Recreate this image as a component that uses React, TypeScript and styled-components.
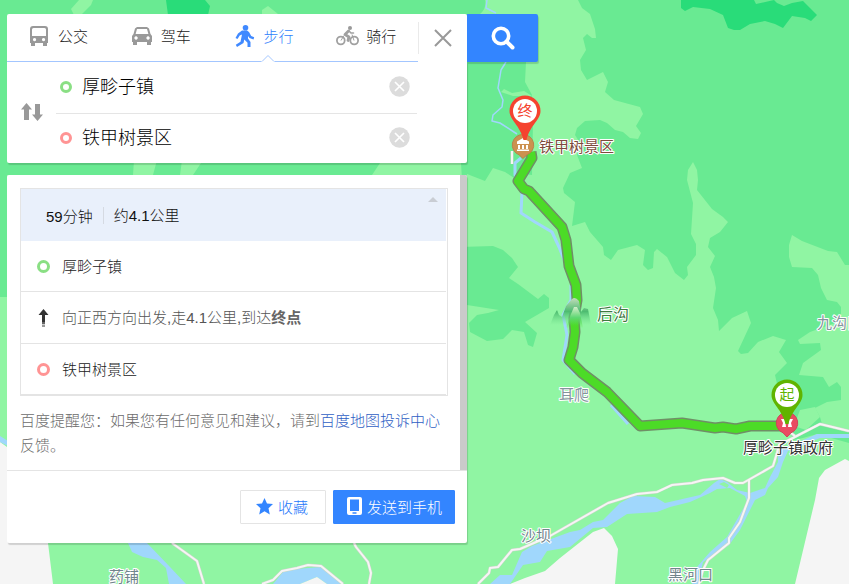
import React, { useState } from "react";
import styled, { createGlobalStyle } from "styled-components";

const GlobalStyle = createGlobalStyle`
  *, *::before, *::after { box-sizing: border-box; }
  body {
    margin: 0;
    background: #90f5a3;
    font-family: "Liberation Sans", "Noto Sans CJK SC", sans-serif;
    font-size: 15px;
    font-weight: 300;
    color: #222;
  }
  button, input { font: inherit; color: inherit; }
  button { border: 0; padding: 0; background: none; cursor: pointer; }
`;

const Page = styled.main`
  position: relative;
  min-height: 100vh;
  padding: 14px 7px;
  overflow: hidden;
`;

const MapCanvas = styled.svg`
  position: absolute;
  inset: 0;
  width: 100%;
  height: 100%;
`;

const MapLabel = styled.text<{ $size?: number }>`
  font-family: "Noto Sans CJK SC", sans-serif;
  font-size: ${(p) => p.$size ?? 15}px;
  font-weight: 400;
  stroke: #fff;
  stroke-width: 2px;
  stroke-linejoin: round;
  paint-order: stroke;
`;

const PinText = styled.text`
  font-family: "Noto Sans CJK SC", sans-serif;
  font-size: 15px;
  font-weight: 400;
  text-anchor: middle;
`;

const Sidebar = styled.div`
  position: relative;
  display: flex;
  flex-direction: column;
  gap: 12px;
  width: 100%;
  max-width: 531px;
`;

const SearchRow = styled.div`
  display: flex;
  align-items: flex-start;
`;

const Card = styled.section`
  background: #fff;
  border-radius: 2px;
  box-shadow: 1px 2px 1px rgba(0, 0, 0, 0.15);
`;

const SearchCard = styled(Card)`
  flex: 1;
  min-width: 0;
`;

const SearchButton = styled.button`
  display: grid;
  place-items: center;
  flex: 0 0 71px;
  height: 48px;
  border-radius: 0 2px 2px 0;
  background: #3385ff;
  box-shadow: 1px 2px 1px rgba(0, 0, 0, 0.15);
`;

const ModeBar = styled.div`
  display: flex;
  height: 48px;
`;

const Tabs = styled.div`
  flex: 1;
  display: grid;
  grid-template-columns: repeat(4, 1fr);
  border-bottom: 1px solid #a3c6ff;
`;

const Tab = styled.button<{ $active: boolean }>`
  position: relative;
  display: flex;
  align-items: center;
  gap: 6px;
  padding-left: 19px;
  padding-bottom: 4px;
  white-space: nowrap;
  color: ${(p) => (p.$active ? "#2f7ffc" : "#222")};
`;

const IconSlot = styled.span`
  display: grid;
  place-items: center;
  flex: 0 0 26px;
`;

const Caret = styled.svg`
  position: absolute;
  left: 48px;
  bottom: -1px;
`;

const CloseCell = styled.div`
  display: flex;
  align-items: center;
  flex: 0 0 49px;
`;

const CloseButton = styled.button`
  display: grid;
  place-items: center;
  width: 100%;
  height: 32px;
  border-left: 1px solid #eaeaea;
`;

const RouteForm = styled.form`
  display: flex;
  padding-right: 50px;
`;

const SwapButton = styled.button`
  display: grid;
  place-items: center;
  flex: 0 0 49px;
  padding-bottom: 2px;
`;

const Fields = styled.div`
  flex: 1;
  min-width: 0;
`;

const Field = styled.label`
  display: flex;
  align-items: center;
  gap: 10px;
  height: 51px;
  padding: 0 7px 2px 4px;
  & + & {
    height: 50px;
    border-top: 1px solid #e5e5e5;
  }
`;

const FieldInput = styled.input`
  flex: 1;
  min-width: 0;
  padding: 0 0 4px;
  border: 0;
  outline: 0;
  background: none;
  font-size: 18px;
  color: #000;
`;

const ClearButton = styled.button`
  display: grid;
  place-items: center;
`;

const Ring = styled.span<{ $color: string; $size: number }>`
  flex: none;
  width: ${(p) => p.$size}px;
  height: ${(p) => p.$size}px;
  border: 3px solid ${(p) => p.$color};
  border-radius: 50%;
`;

const ResultCard = styled(Card)`
  margin-right: 71px;
  overflow: hidden;
`;

const Scroller = styled.div`
  padding: 13px 12px 12px 13px;
  border-right: 7px solid #cacaca;
`;

const Plan = styled.div`
  padding-right: 1px;
  border: 1px solid #e4e4e4;
`;

const PlanHead = styled.header`
  display: flex;
  align-items: center;
  position: relative;
  height: 52px;
  padding-left: 25px;
  background: #e9f0fb;
  color: #111;
`;

const Distance = styled.span`
  margin-left: 10px;
  padding-left: 10px;
  line-height: 17px;
  border-left: 1px solid #d5dae2;
`;

const CollapseButton = styled.button`
  position: absolute;
  top: 8px;
  right: 8px;
  display: grid;
`;

const Steps = styled.ol`
  margin: 0;
  padding: 0;
  list-style: none;
`;

const Step = styled.li<{ $muted?: boolean }>`
  display: flex;
  align-items: center;
  gap: 12px;
  height: 51px;
  padding-left: 16px;
  border-bottom: 1px solid #e4e4e4;
  color: ${(p) => (p.$muted ? "#555" : "#222")};
  &:nth-child(2) { height: 52px; }
`;

const StepText = styled.span`
  padding-bottom: 2px;
`;

const Target = styled.strong`
  font-weight: 700;
  color: #666;
`;

const StepIcon = styled.span`
  display: grid;
  place-items: center;
  flex: 0 0 13px;
`;

const Notice = styled.p`
  margin: 12px 0 0;
  line-height: 25px;
  color: #6c6c6c;
`;

const NoticeLink = styled.a`
  color: #2f60c4;
  text-decoration: none;
`;

const Actions = styled.footer`
  display: flex;
  justify-content: flex-end;
  gap: 7px;
  padding: 19px 12px;
  border-top: 1px solid #e4e4e4;
`;

const ActionButton = styled.button<{ $primary?: boolean }>`
  display: flex;
  align-items: center;
  justify-content: center;
  gap: 5px;
  height: 34px;
  padding: ${(p) => (p.$primary ? "0 12px 2px 13px" : "0 17px 2px 15px")};
  border: 1px solid ${(p) => (p.$primary ? "#3385ff" : "#e4e4e4")};
  border-radius: 1px;
  background: ${(p) => (p.$primary ? "#3385ff" : "#fff")};
  color: ${(p) => (p.$primary ? "#fff" : "#2478fa")};
`;

const BusIcon = () => (
  <svg width="18" height="20" viewBox="0 0 18 20">
    <path fillRule="evenodd" fill="#999" d="M3 0h12a3 3 0 0 1 3 3v14h-1v3h-4v-3H5v3H1v-3H0V3a3 3 0 0 1 3-3zM3.500 2Q2 2 2 3.500V10h14V3.500Q16 2 14.500 2zM4.500 12a1.600 1.600 0 1 0 .1 0zM13.500 12a1.600 1.600 0 1 0 .1 0z" />
  </svg>
);

const CarIcon = () => (
  <svg width="20" height="18" viewBox="0 0 20 18">
    <path fillRule="evenodd" fill="#999" d="M5 0h10l2 1.500L18.500 7 20 9v6h-1v3h-4v-3H5v3H1v-3H0V9l1.500-2L3 1.500zM5 2 3.600 7h12.800L15 2zM4 9.300a1.700 1.700 0 1 0 .1 0zM16 9.300a1.700 1.700 0 1 0 .1 0z" />
  </svg>
);

const WalkIcon = () => (
  <svg width="20" height="22" viewBox="0 0 20 22">
    <circle cx="10.500" cy="2.800" r="2.800" fill="#4089ff" />
    <path fill="#4089ff" d="M7 5.500h5l2 1.500 2.200 4 3 1.300-.7 2.200-4-1.500-1.500-2v2.500l2.500 3.500V22h-3v-4.200L9.300 14.500 8.500 18 2 22 .8 19.700l4.700-3L7 9.500l-2.300 1L2.500 14l-2-1L3 8.500z" />
  </svg>
);

const BikeIcon = () => (
  <svg width="23" height="20" viewBox="0 0 23 20">
    <g fill="none" stroke="#a0a0a0">
      <circle cx="4.800" cy="14.500" r="3.900" strokeWidth="1.800" />
      <circle cx="18.200" cy="14.500" r="3.900" strokeWidth="1.800" />
      <path strokeWidth="2.800" strokeLinejoin="round" strokeLinecap="round" d="M12.500 5 9 8.500l4 2.500-1 3.500" />
      <path strokeWidth="1.600" strokeLinecap="round" d="M13 5l2 2h2.500" />
      <path strokeWidth="1" d="M5 14.500l3-5M18 14.500 16 8.500" />
    </g>
    <circle cx="14" cy="2" r="2" fill="#999" />
  </svg>
);

const CloseIcon = () => (
  <svg width="18" height="18" viewBox="0 0 18 18">
    <path d="M1 1 17 17M17 1 1 17" stroke="#999" strokeWidth="2" />
  </svg>
);

const SearchIcon = () => (
  <svg width="24" height="24" viewBox="0 0 24 24" fill="none" stroke="#fff">
    <circle cx="10" cy="10" r="7.700" strokeWidth="3.600" />
    <path d="m15.500 15.500 6 6" strokeWidth="4" strokeLinecap="round" />
  </svg>
);

const SwapIcon = () => (
  <svg width="22" height="18" viewBox="0 0 22 18" fill="#999">
    <path d="M5.500 0 11 6.500H8V17H3V6.500H0zM16.500 18 11 11.500h3V1h5v10.500h3z" />
  </svg>
);

const ClearIcon = () => (
  <svg width="21" height="21" viewBox="0 0 21 21">
    <circle cx="10.500" cy="10.500" r="10.200" fill="#dcdcdc" />
    <path d="m6 6 9 9m0-9-9 9" stroke="#fff" strokeWidth="1.700" />
  </svg>
);

const StraightIcon = () => (
  <svg width="11" height="18" viewBox="0 0 11 18">
    <path d="M5.500 0 10.500 6H7V13H4V6H.5z" fill="#333" />
    <path d="M4 13h3v2H4z" fill="#666" />
    <path d="M4 15.500h3V18H4z" fill="#999" />
  </svg>
);

const StarIcon = () => (
  <svg width="17" height="17" viewBox="0 0 17 17">
    <path fill="#3385ff" d="m8.500 0 2.500 5.600 6 .5-4.500 4.100 1.300 6.300-5.300-3.200-5.300 3.200 1.300-6.300L0 6.100l6-.5z" />
  </svg>
);

const PhoneIcon = () => (
  <svg width="15" height="18" viewBox="0 0 15 18">
    <path fillRule="evenodd" fill="#fff" d="M2 0h11a2 2 0 0 1 2 2v14a2 2 0 0 1-2 2H2a2 2 0 0 1-2-2V2a2 2 0 0 1 2-2zM3 2.500V14h9V2.500zM5.500 15.200v1.500h4v-1.500z" />
  </svg>
);

function Pin({ x, y, color, text }: { x: number; y: number; color: string; text: string }) {
  return (
    <g transform={`translate(${x} ${y})`}>
      <path fill={color} d="M0-15.500A15.500 15.500 0 0 1 15.500 0C15.500 9 5 14 1.500 29h-3C-5 14-15.500 9-15.500 0A15.500 15.500 0 0 1 0-15.500z" />
      <circle r="12" fill="#fff" />
      <PinText y={5} fill={color}>{text}</PinText>
    </g>
  );
}

const LAND = "#90f5a3";
const FOREST = "#69ea92";
const DENSE = "#29dc79";
const WATER = "#a0d7fc";
const PLAIN = "#f5f5f5";

const routePoints =
  "531,152 532,158 518,181 524,189 529,191 562,227 566,240 569,266 576,285 577,300 574,318 575,332 573,347 569,360 582,373 607,392 640,426 682,423 715,428 723,427 736,429 750,426 783,426";

const roads = [
  "478,584 489,573 490,568 498,567 512,550 520,549 550,536 608,503 637,494 657,492 672,485 692,483 703,480 723,478 735,483 743,483 773,466 777,453 779,445 787,441 820,424 849,431",
  "749,480 749,498 740,522 729,538 729,543 708,560 703,570 699,584",
  "172,543 197,561 204,584",
  "262,584 273,580 282,571 297,568 308,565 321,566 343,584",
  "354,543 356,547 368,562 371,573 369,584",
  "512,151 512,164",
  "787,430 795,436",
];

const labels = [
  { x: 539, y: 152, text: "铁甲树景区", color: "#7d4b3c" },
  { x: 597, y: 320, text: "后沟", color: "#3f7a3f", size: 16 },
  { x: 559, y: 400, text: "耳爬", color: "#84949c" },
  { x: 521, y: 541, text: "沙坝", color: "#71858c" },
  { x: 109, y: 582, text: "药铺", color: "#71858c" },
  { x: 668, y: 580, text: "黑河口", color: "#71858c" },
  { x: 817, y: 328, text: "九沟口", color: "#84949c" },
  { x: 743, y: 453, text: "厚畛子镇政府", color: "#333" },
];

function MapView() {
  return (
    <MapCanvas viewBox="0 0 849 584" preserveAspectRatio="xMinYMin slice" role="img" aria-label="步行路线地图">
      <defs>
        <linearGradient id="peak" x1="0" y1="0" x2="0" y2="1">
          <stop offset="0" stopColor="#c4dcbb" />
          <stop offset="0.500" stopColor="#4dbb70" />
          <stop offset="1" stopColor="#6fe08c" stopOpacity="0" />
        </linearGradient>
        <linearGradient id="foothill" x1="0" y1="0" x2="0" y2="1">
          <stop offset="0" stopColor="#d3ecca" />
          <stop offset="0.500" stopColor="#5fd873" />
          <stop offset="1" stopColor="#4cdb27" stopOpacity="0" />
        </linearGradient>
      </defs>
      <rect width="849" height="584" fill={LAND} />
      <g fill={FOREST}>
        <path d="M0 0H485Q487 8 480 14L467 62H526L525 82 532 95 533 122 532 175 524 174 519 181 505 172 493 168 485 181 467 174 467 180H462L461 163H380L372 175H0V297H0z" />
        <path d="M0 160H7V297H0z" />
        <path d="M578 0 582 8 590 14 595 29 596 38 592 38 587 34 583 38 586 50 580 60 581 70 587 80 603 72 608 82 605 92 614 100 640 107 643 114 636 126 641 133 638 139 630 138 623 132 615 130 607 123 600 120 585 121 577 128 575 135 580 143 577 155 582 168 570 173 563 188 564 193 575 202 572 226 585 222 590 232 603 247 604 255 611 260 618 250 637 245 645 250 643 265 648 270 653 268 654 252 657 249 667 257 675 273 684 280 688 275 687 267 696 255 696 244 691 234 693 203 687 180 688 170 693 162 697 170 698 180 697 190 712 209 723 217 728 222 720 232 710 238 708 247 715 256 710 267 714 277 716 288 713 308 718 320 719 331 732 318 747 311 751 323 738 351 741 354 748 353 758 342 773 336 786 340 779 352 787 363 775 375 783 410 793 440 803 438 817 434 849 443V432L822 424 820 417 815 408 827 402 841 400 841 387 837 382 829 387 823 377 799 375 803 363 821 350 820 343 800 344 798 340 810 332 835 323 841 318 841 307 837 302 827 300 821 288 818 275 812 268 792 267 789 257 789 245 792 235 802 241 828 251 837 252 845 265 849 265V0z" />
        <path d="M460 247 493 246 503 250 512 258 518 267 509 278 518 284 538 299 544 294 549 298 549 308 525 322 537 333 533 347 528 345 524 332 512 330 503 339 487 341 470 332 469 323 477 315 488 313 499 310 467 305H460z" />
      </g>
      <path fill={LAND} d="M79 0 71 9 74 15H81L91 5 93 0zM262 10 268 6 278 14H262zM134 160H157L153 175H133zM182 160H203L193 175H180zM501 92 504 89 512 93 524 91 532 96 513 96zM800 410 815 407 820 417 806 430 794 426z" />
      <path fill={DENSE} d="M166 0 168 15H208L210 6 205 0zM681 0V8L685 11 693 7 710 9 723 15 728 28 734 30H740L750 24 765 21 775 24 783 28 792 16 805 18 811 21 817 15 810 8 803 1 792 3 784 6 777 3 774 0 756 4 754 0z" />
      <path fill={PLAIN} d="M0 442 7 447 46 470 48 543 53 584H0zM849 461 845 459 825 470 819 478 815 500 795 584H849zM510 584 525 578 545 571 560 558 593 532 604 528 612 536 618 549 615 584z" />
      <path fill={WATER} d="M0 436 8 441V446L0 442zM128 543 132 552 143 557 157 560 166 568 169 584H186L170 567 147 543zM273 584 283 572 297 569 320 567 343 584H327L317 577 300 584z" />
      <path fill={PLAIN} d="m300 584 17-7 10 7z" />
      <path fill={WATER} d="M490 584 500 575 512 575 522 552 532 546 570 532 580 530 593 522 603 520 620 503 633 496 655 497 665 503 700 495 714 483 720 479 727 482 737 490 750 493 765 488 770 477 778 462 778 450 787 447 817 434 849 434V438L820 438 788 451 783 462 778 477 768 488 765 495 755 500 740 530 729 545 703 562 698 584H692L697 567 710 552 727 537 747 502 745 496 730 488 717 489 710 493 690 502 670 507 657 512 627 514 607 527 593 528 570 547 547 551 540 562 523 565 510 584z" />
      <path fill={LAND} d="m719 484 5-2 5 3-2 3z" />
      <g fill="none" stroke={WATER} strokeLinejoin="round">
        <path strokeWidth="1.500" d="M487 0 486 8 496 13M506 62 501 70 498 88 503 100 502 107 493 115 492 121 500 123 517 134" />
        <path strokeWidth="3" d="M521 158 515 163 515 175 522 193 521 213 535 222 552 232 559 247 565 262" />
        <path strokeWidth="3" d="M571 285 571 300 563 315 567 335 563 360 575 374M611 405 628 424" />
      </g>
      <g fill="none" strokeLinejoin="round">
        {roads.map((d) => <polyline key={d} points={d} stroke="#c9d6c9" strokeWidth="3" />)}
        {roads.map((d) => <polyline key={d} points={d} stroke="#f7f5f5" strokeWidth="2" />)}
        <polyline points={routePoints} stroke="#6f8f66" strokeWidth="11" />
        <polyline points={routePoints} stroke="#4cdb27" strokeWidth="8" />
      </g>
      <path fill="url(#peak)" d="M550 325 554 315 557 310 559 315 562 317 566 306 572 299Q575 296 579 301L581 312 584 308 588 309 591 325z" />
      <path fill="url(#foothill)" d="M566 328 571 314 574 307 577 307 580 313 583 328z" />
      <g transform="translate(523 145)">
        <path fill="#cc914f" stroke="#b8834a" d="M0-10.500A10.500 10.500 0 0 1 4 9.800L0 13.500-4 9.800A10.500 10.500 0 0 1 0-10.500z" />
        <path fill="#fff" d="M0-7 6-3.500V-1H-6V-3.500zM-5 0h2v4h-2zM-1 0h2v4h-2zM3 0h2v4H3zM-6 4.500H6V6H-6z" />
      </g>
      <g transform="translate(787 423)">
        <path fill="#e94b62" stroke="#cf4559" d="M0-10.500A10.500 10.500 0 0 1 4 9.800L0 14-4 9.800A10.500 10.500 0 0 1 0-10.500z" />
        <path fill="#fff" d="M-6-4h4l1 8h-4l1-4zM6-4H2L1 4h4L4 0z" />
      </g>
      <Pin x={525} y={111} color="#f5432f" text="终" />
      <Pin x={787} y={395} color="#60b400" text="起" />
      {labels.map((l) => (
        <MapLabel key={l.text} x={l.x} y={l.y} fill={l.color} $size={l.size}>{l.text}</MapLabel>
      ))}
    </MapCanvas>
  );
}

const modes = [
  { name: "公交", Icon: BusIcon },
  { name: "驾车", Icon: CarIcon },
  { name: "步行", Icon: WalkIcon },
  { name: "骑行", Icon: BikeIcon },
];

export default function App() {
  const [mode, setMode] = useState("步行");
  const [from, setFrom] = useState("厚畛子镇");
  const [to, setTo] = useState("铁甲树景区");
  const swap = () => {
    setFrom(to);
    setTo(from);
  };

  return (
    <>
      <GlobalStyle />
      <Page>
        <MapView />
        <Sidebar>
          <SearchRow>
            <SearchCard>
              <ModeBar>
                <Tabs>
                  {modes.map(({ name, Icon }) => (
                    <Tab key={name} type="button" $active={mode === name} aria-pressed={mode === name} onClick={() => setMode(name)}>
                      <IconSlot><Icon /></IconSlot>
                      {name}
                      {mode === name && (
                        <Caret width="14" height="8" viewBox="0 0 14 8">
                          <path d="M0 8 7 1l7 7z" fill="#fff" />
                          <path d="M1 7.500 7 1.500l6 6" fill="none" stroke="#a3c6ff" />
                        </Caret>
                      )}
                    </Tab>
                  ))}
                </Tabs>
                <CloseCell>
                  <CloseButton type="button" aria-label="关闭"><CloseIcon /></CloseButton>
                </CloseCell>
              </ModeBar>
              <RouteForm onSubmit={(e) => e.preventDefault()}>
                <SwapButton type="button" aria-label="交换起终点" onClick={swap}><SwapIcon /></SwapButton>
                <Fields>
                  <Field>
                    <Ring $color="#8adf84" $size={12} />
                    <FieldInput aria-label="起点" value={from} onChange={(e) => setFrom(e.target.value)} />
                    <ClearButton type="button" aria-label="清空起点" onClick={() => setFrom("")}><ClearIcon /></ClearButton>
                  </Field>
                  <Field>
                    <Ring $color="#ff9494" $size={12} />
                    <FieldInput aria-label="终点" value={to} onChange={(e) => setTo(e.target.value)} />
                    <ClearButton type="button" aria-label="清空终点" onClick={() => setTo("")}><ClearIcon /></ClearButton>
                  </Field>
                </Fields>
              </RouteForm>
            </SearchCard>
            <SearchButton type="button" aria-label="搜索"><SearchIcon /></SearchButton>
          </SearchRow>

          <ResultCard>
            <Scroller>
              <Plan>
                <PlanHead>
                  <span>59分钟</span>
                  <Distance>约4.1公里</Distance>
                  <CollapseButton type="button" aria-label="收起">
                    <svg width="10" height="5" viewBox="0 0 10 5"><path d="M5 0l5 5H0z" fill="#c9cdd4" /></svg>
                  </CollapseButton>
                </PlanHead>
                <Steps>
                  <Step>
                    <StepIcon><Ring $color="#8adf84" $size={13} /></StepIcon>
                    <StepText>厚畛子镇</StepText>
                  </Step>
                  <Step $muted>
                    <StepIcon><StraightIcon /></StepIcon>
                    <StepText>向正西方向出发,走4.1公里,到达<Target>终点</Target></StepText>
                  </Step>
                  <Step>
                    <StepIcon><Ring $color="#ff9494" $size={13} /></StepIcon>
                    <StepText>铁甲树景区</StepText>
                  </Step>
                </Steps>
              </Plan>
              <Notice>
                百度提醒您：如果您有任何意见和建议，请到<NoticeLink href="#complaint">百度地图投诉中心</NoticeLink>反馈。
              </Notice>
            </Scroller>
            <Actions>
              <ActionButton type="button"><StarIcon />收藏</ActionButton>
              <ActionButton type="button" $primary><PhoneIcon />发送到手机</ActionButton>
            </Actions>
          </ResultCard>
        </Sidebar>
      </Page>
    </>
  );
}
